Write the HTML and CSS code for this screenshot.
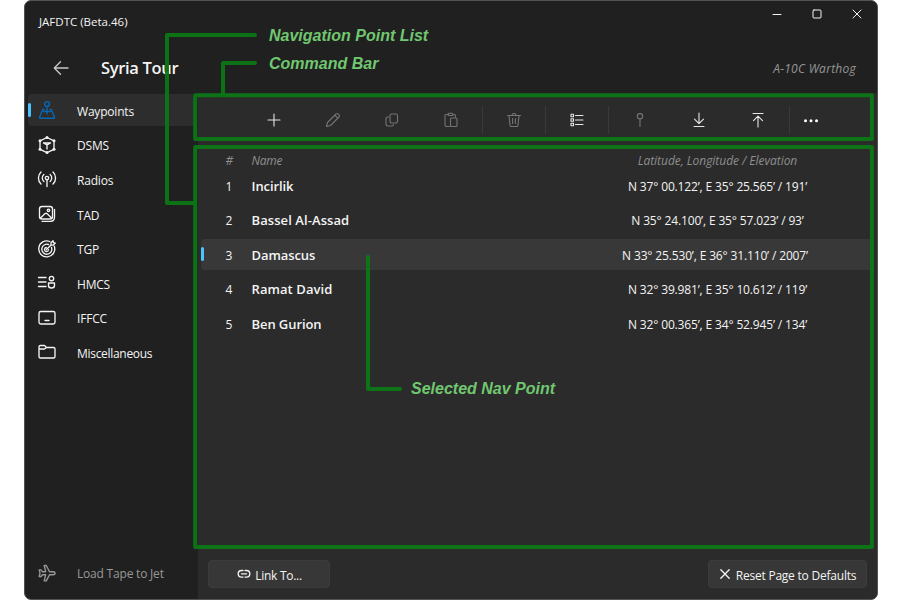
FILE: index.html
```html
<!DOCTYPE html>
<html lang="en">
<head>
<meta charset="utf-8">
<title>JAFDTC</title>
<link rel="stylesheet" href="styles.css">
</head>
<body>
<div class="window">
  <header class="header">
    <div class="titlebar">
      <span class="app-name">JAFDTC (Beta.46)</span>
      <div class="window-buttons">
        <svg width="12" height="12" viewBox="0 0 12 12"><path d="M2 6.500h8"/></svg>
        <svg width="12" height="12" viewBox="0 0 12 12"><rect x="2" y="2" width="8" height="8" rx="1"/></svg>
        <svg width="12" height="12" viewBox="0 0 12 12"><path d="M2 2l8 8M10 2l-8 8"/></svg>
      </div>
    </div>
    <div class="pagebar">
      <svg class="back" width="16" height="16" viewBox="0 0 16 16"><path d="M15 8H1.5M7.5 1.8L1.3 8l6.2 6.2"/></svg>
      <h1>Syria Tour</h1>
      <span class="airframe">A-10C Warthog</span>
    </div>
  </header>
  <div class="body">
    <nav class="sidebar">
      <div class="nav-item active">
        <svg width="20" height="20" viewBox="0 0 20 20"><circle cx="10" cy="4" r="2.4"/><path d="M10 6.5V14M7 9.5H5.7L2.5 17.2q-.3 1 .8 1h13.400q1.100 0 .8-1L14.300 9.500H13M6.500 11.500h7"/></svg>
        <span>Waypoints</span>
      </div>
      <div class="nav-item">
        <svg width="20" height="20" viewBox="0 0 20 20"><path d="M10 2.500l7 3.300v8.500l-7 3.300-7-3.300V5.800zM6.500 8l3.500 2 3.500-2M10 10v4M6.500 8h7"/><g class="dots"><circle cx="10" cy="2.500" r="1.500"/><circle cx="3" cy="5.700" r="1.500"/><circle cx="17" cy="5.700" r="1.500"/><circle cx="3" cy="14.300" r="1.500"/><circle cx="17" cy="14.300" r="1.500"/><circle cx="10" cy="17.600" r="1.500"/></g></svg>
        <span>DSMS</span>
      </div>
      <div class="nav-item">
        <svg width="20" height="20" viewBox="0 0 20 20"><circle cx="10" cy="9" r="1.700"/><path d="M10 10.700V17.500M6.900 12.500a4.600 4.600 0 0 1 0-7M13.100 5.500a4.600 4.600 0 0 1 0 7M4 15a8.300 8.300 0 0 1 0-12M16 3a8.300 8.300 0 0 1 0 12"/></svg>
        <span>Radios</span>
      </div>
      <div class="nav-item">
        <svg width="20" height="20" viewBox="0 0 20 20"><rect x="2.500" y="2.500" width="13" height="12.500" rx="2.500"/><path d="M3.300 14.300l4.500-4.500q1.200-1 2.400 0l4.600 4.500M5 17.300h8.500q4 0 4-4V5.500"/><circle cx="11.500" cy="6.300" r="1.200"/></svg>
        <span>TAD</span>
      </div>
      <div class="nav-item">
        <svg width="20" height="20" viewBox="0 0 20 20"><path d="M12.800 2.500A8 8 0 1 0 17.300 7.200M11.500 5.500A5 5 0 1 0 14.500 8.500M9.300 8.500A2 2 0 1 0 11.500 10.700M9.500 10.500L14 6M14 6V3.800L16 1.800l.5 1.800 1.800.5-2 2z"/></svg>
        <span>TGP</span>
      </div>
      <div class="nav-item">
        <svg width="20" height="20" viewBox="0 0 20 20"><path d="M1.500 4.500h7.500M1.500 9h7.500M1.500 13.500h7.500M11.500 10h6v2.500q0 2.500-3 2.500t-3-2.500z"/><circle cx="14.500" cy="5.500" r="2.200"/></svg>
        <span>HMCS</span>
      </div>
      <div class="nav-item">
        <svg width="20" height="20" viewBox="0 0 20 20"><rect x="2" y="3.500" width="16" height="12.500" rx="1.800"/><path d="M8 12.500h4"/></svg>
        <span>IFFCC</span>
      </div>
      <div class="nav-item misc">
        <svg width="20" height="20" viewBox="0 0 20 20"><path d="M2 7V5q0-1.500 1.500-1.500h4L9.500 5.500h7q1.500 0 1.500 1.500v7.500q0 1.500-1.500 1.500h-13q-1.500 0-1.500-1.500V7h5.500l2-1.500"/></svg>
        <span>Miscellaneous</span>
      </div>
      <div class="nav-item load">
        <svg width="20" height="20" viewBox="0 0 20 20"><path d="M18 10.200q0-1.500-2-1.500h-3.500L9.300 2.500H7.200l1.500 6.200H5.500L4 6.900H2.200l.8 3.300-.8 3.300H4l1.500-1.800h3.200l-1.500 6.200h2.100l3.200-6.200H16q2 0 2-1.500z"/></svg>
        <span>Load Tape to Jet</span>
      </div>
    </nav>
    <main class="content">
      <div class="commands">
        <div class="cmd"><svg class="bright" width="16" height="16" viewBox="0 0 16 16"><path d="M8 2v12M2 8h12"/></svg></div>
        <div class="cmd"><svg width="16" height="16" viewBox="0 0 16 16"><path d="M1.500 14.500l1-4L11 2q1-1 2.200 0l.8.800q1 1.200 0 2.200L5.500 13.500zM9.800 3.200l3 3"/></svg></div>
        <div class="cmd"><svg width="16" height="16" viewBox="0 0 16 16"><rect x="6" y="2" width="7.500" height="9" rx="1.700"/><path d="M4.500 5H3.700Q2 5 2 6.700v5.600Q2 14 3.700 14h4.100q1.700 0 1.700-1.500"/></svg></div>
        <div class="cmd"><svg width="16" height="16" viewBox="0 0 16 16"><path d="M5 2.500H3.200q-1.200 0-1.200 1.200v9.600q0 1.200 1.200 1.200h3.300M10 2.500h1.300q1.200 0 1.200 1.200V5"/><rect x="5" y="1.300" width="5" height="2.200" rx="1"/><rect x="7.500" y="6" width="6.500" height="8.500" rx="1"/></svg></div>
        <i class="sep"></i>
        <div class="cmd"><svg width="16" height="16" viewBox="0 0 16 16"><path d="M1.500 3.500h13M6 3.200Q6 1.500 8 1.500t2 1.700M3 3.500l1 9.800q.2 1.200 1.300 1.200h5.400q1.100 0 1.300-1.200l1-9.800M6.600 6.500v5M9.400 6.500v5"/></svg></div>
        <i class="sep"></i>
        <div class="cmd"><svg class="bright" width="16" height="16" viewBox="0 0 16 16"><path d="M6.500 3.500H14M6.500 8H14M6.500 12.500H14"/><rect x="2" y="2.300" width="2.500" height="2.500"/><rect x="2" y="6.800" width="2.500" height="2.500"/><rect x="2" y="11.300" width="2.500" height="2.500"/></svg></div>
        <i class="sep"></i>
        <div class="cmd pin"><svg width="16" height="16" viewBox="0 0 16 16"><circle cx="8" cy="4.300" r="2.700"/><path d="M8 7v7.500"/></svg></div>
        <div class="cmd"><svg class="bright" width="16" height="16" viewBox="0 0 16 16"><path d="M8 1v10.500M3.500 7.200L8 11.700l4.500-4.500M3 14.500h10"/></svg></div>
        <div class="cmd"><svg class="bright" width="16" height="16" viewBox="0 0 16 16"><path d="M8 15V4.300M3.500 8.600L8 4.100l4.500 4.500M3 1.500h10"/></svg></div>
        <i class="sep"></i>
        <div class="more"><svg width="16" height="16" viewBox="0 0 16 16"><circle cx="2.500" cy="8.700" r="1.500"/><circle cx="8" cy="8.700" r="1.500"/><circle cx="13.500" cy="8.700" r="1.500"/></svg></div>
      </div>
      <div class="list">
        <div class="list-head"><span class="num">#</span><span class="name">Name</span><span class="pos">Latitude, Longitude / Elevation</span></div>
        <div class="row"><span class="num">1</span><span class="name">Incirlik</span><span class="pos">N 37° 00.122’, E 35° 25.565’ / 191’</span></div>
        <div class="row"><span class="num">2</span><span class="name wide">Bassel Al-Assad</span><span class="pos">N 35° 24.100’, E 35° 57.023’ / 93’</span></div>
        <div class="row selected"><span class="num">3</span><span class="name">Damascus</span><span class="pos">N 33° 25.530’, E 36° 31.110’ / 2007’</span></div>
        <div class="row"><span class="num">4</span><span class="name wide">Ramat David</span><span class="pos">N 32° 39.981’, E 35° 10.612’ / 119’</span></div>
        <div class="row"><span class="num">5</span><span class="name">Ben Gurion</span><span class="pos">N 32° 00.365’, E 34° 52.945’ / 134’</span></div>
      </div>
      <footer class="footer">
        <div class="button link"><svg width="14" height="14" viewBox="0 0 14 14"><path d="M6 3.500H4.500a3.300 3.300 0 0 0 0 6.600H6M8 3.500h1.500a3.300 3.300 0 0 1 0 6.600H8M4.500 6.800h5"/></svg><span>Link To...</span></div>
        <div class="button reset"><svg width="12" height="12" viewBox="0 0 12 12"><path d="M1.800 1.800l8.400 8.400M10.200 1.800l-8.400 8.400"/></svg><span>Reset Page to Defaults</span></div>
      </footer>
    </main>
  </div>
</div>
<svg class="callouts" width="900" height="600" viewBox="0 0 900 600">
  <rect x="195.200" y="95.200" width="676.700" height="43.700"/>
  <rect x="195.200" y="147" width="676.700" height="400"/>
  <path d="M255 35H167V203H195M255 63H223V95M368 257V389H400"/>
</svg>
<div class="callout-label list-label">Navigation Point List</div>
<div class="callout-label bar-label">Command Bar</div>
<div class="callout-label point-label">Selected Nav Point</div>
</body>
</html>
```
FILE: styles.css
```css
* { box-sizing: border-box; }
body {
  margin: 0;
  height: 600px;
  overflow: hidden;
  background: #fff;
  font-family: "Open Sans", "Noto Sans", sans-serif;
  font-size: 12px;
  letter-spacing: -0.2px;
  color: #f4f4f4;
}
svg { flex: none; fill: none; stroke: currentColor; stroke-width: 1.35; stroke-linecap: round; stroke-linejoin: round; }
.window {
  width: 854px;
  height: 600px;
  margin-left: 24px;
  display: flex;
  flex-direction: column;
  background: #202020;
  border: 1px solid #525252;
  border-radius: 7px;
  overflow: hidden;
}
.header { height: 92px; flex: none; }
.titlebar { height: 44px; display: flex; justify-content: space-between; padding: 0 14px; }
.app-name { line-height: 42px; font-size: 11.5px; letter-spacing: 0; }
.window-buttons { display: flex; gap: 28px; padding-top: 7px; }
.window-buttons svg { stroke-width: 1; }
.pagebar { display: flex; align-items: center; height: 46px; padding: 0 21px 0 28px; }
.back { color: #c8c8c8; }
h1 { margin: -2px 0 0 32px; font-size: 16.5px; font-weight: 600; letter-spacing: -0.32px; }
.airframe { margin-left: auto; font-style: italic; letter-spacing: 0.25px; color: #969696; }
.body { flex: 1; display: flex; min-height: 0; }
.sidebar { width: 173px; flex: none; display: flex; flex-direction: column; gap: 3.1px; padding: 1px 3px 9px; }
.nav-item { height: 31.500px; flex: none; display: flex; align-items: center; gap: 20px; padding-left: 9px; border-radius: 4px; white-space: nowrap; }
.nav-item span { padding-top: 3px; }
.nav-item svg { margin-top: 1px; }
.misc { letter-spacing: -0.3px; }
.active { background: #2d2d2d; padding-left: 0; gap: 0; }
.active::before { content: ""; width: 3px; height: 14px; border-radius: 2px; background: #4cc2ff; margin-right: 6px; }
.active svg { color: #0a67b5; margin-right: 20px; }
.dots { fill: currentColor; stroke: none; }
.load { margin-top: auto; margin-bottom: 2px; color: #989898; }
.load span { padding-top: 2px; }
.content { flex: 1; min-width: 0; background: #2b2b2b; display: flex; flex-direction: column; }
.commands { height: 55px; display: flex; align-items: center; padding: 0 0 1px 46px; }
.cmd { width: 59.100px; display: flex; justify-content: center; color: #757575; }
.cmd svg, .more svg { stroke-width: 1.1; }
.cmd .bright { color: #e6e6e6; }
.pin { padding-left: 1px; }
.sep { width: 1px; height: 28px; margin: 0 1.400px; background: #3a3a3a; }
.more { margin-left: 12px; display: flex; }
.more svg { fill: #fff; stroke: none; }
.list { flex: 1; padding: 0 3px 0 3px; display: flex; flex-direction: column; gap: 3.700px; }
.list-head { height: 18px; flex: none; line-height: 26px; display: flex; font-style: italic; color: #8e8e8e; }
.list-head .pos { letter-spacing: -0.03px; }
.row { height: 30.900px; flex: none; line-height: 33.800px; display: flex; position: relative; border-radius: 4px; }
.selected { background: #383838; }
.selected::before { content: ""; position: absolute; left: 0; top: 8px; width: 3px; height: 14px; border-radius: 2px; background: #4cc2ff; }
.num { width: 50.500px; flex: none; padding-left: 24.500px; }
.name { width: 300.500px; flex: none; }
.row .name { font-size: 13px; font-weight: 600; letter-spacing: -0.08px; }
.row .wide { letter-spacing: 0.08px; }
.pos { width: 331px; flex: none; text-align: center; white-space: nowrap; margin-right: -20px; }
.row .pos { letter-spacing: -0.15px; }
.selected .pos { padding-right: 5px; }
.footer { height: 50px; flex: none; display: flex; justify-content: space-between; padding: 11px 10px 0 10px; }
.button { height: 28px; display: flex; align-items: center; justify-content: center; background: #373737; border: 1px solid #3c3c3c; border-radius: 4px; }
.button span { padding-top: 2px; }
.link { width: 122px; gap: 4px; letter-spacing: -0.28px; padding-left: 1px; }
.reset { width: 159px; gap: 5px; letter-spacing: -0.22px; }
.callouts { position: absolute; left: 0; top: 0; stroke: #0a7a16; stroke-width: 4; stroke-linecap: round; opacity: 0.92; }
.callout-label { position: absolute; font: italic bold 16px/20px "Liberation Sans", sans-serif; letter-spacing: 0; color: #70c770; white-space: nowrap; }
.list-label { left: 269px; top: 26px; }
.bar-label { left: 269px; top: 54px; }
.point-label { left: 411px; top: 379px; }
```
